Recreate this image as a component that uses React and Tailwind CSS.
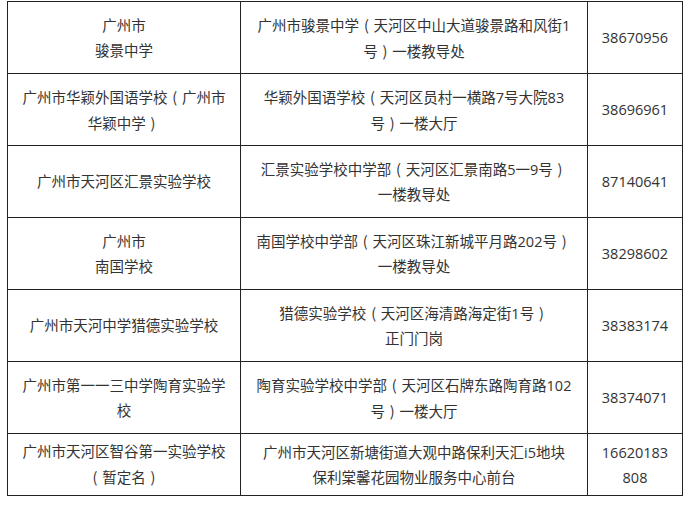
const rows = [
  {
    name: ["广州市", "骏景中学"],
    addr: ["广州市骏景中学（天河区中山大道骏景路和风街1", "号）一楼教导处"],
    tel: ["38670956"],
  },
  {
    name: ["广州市华颖外国语学校（广州市", "华颖中学）"],
    addr: ["华颖外国语学校（天河区员村一横路7号大院83", "号）一楼大厅"],
    tel: ["38696961"],
  },
  {
    name: ["广州市天河区汇景实验学校"],
    addr: ["汇景实验学校中学部（天河区汇景南路5一9号）", "一楼教导处"],
    tel: ["87140641"],
  },
  {
    name: ["广州市", "南国学校"],
    addr: ["南国学校中学部（天河区珠江新城平月路202号）", "一楼教导处"],
    tel: ["38298602"],
  },
  {
    name: ["广州市天河中学猎德实验学校"],
    addr: ["猎德实验学校（天河区海清路海定街1号）", "正门门岗"],
    tel: ["38383174"],
  },
  {
    name: ["广州市第一一三中学陶育实验学", "校"],
    addr: ["陶育实验学校中学部（天河区石牌东路陶育路102", "号）一楼大厅"],
    tel: ["38374071"],
  },
  {
    name: ["广州市天河区智谷第一实验学校", "（暂定名）"],
    addr: ["广州市天河区新塘街道大观中路保利天汇i5地块", "保利棠馨花园物业服务中心前台"],
    tel: ["16620183", "808"],
  },
];

// full-width brackets sit centred in their em box in the reference
const Text = ({ text }) =>
  text.split(/([（）])/).map((part, i) =>
    part === "（" || part === "）" ? (
      <span key={i} className="inline-block w-[1em] text-center" style={{ fontFamily: '"Noto Sans CJK SC", sans-serif' }}>
        {part === "（" ? "(" : ")"}
      </span>
    ) : (
      part
    )
  );

const Lines = ({ lines }) =>
  lines.map((l, i) => (
    <div key={i} className="whitespace-nowrap">
      <Text text={l} />
    </div>
  ));

const App = () => {
  return (
    <div className="w-[692px] h-[508px] bg-white pt-px pl-[7px]" style={{ fontFamily: '"Open Sans", "Noto Sans CJK SC", sans-serif' }}>
      <table className="border-collapse table-fixed text-[14.5px] leading-[25px] text-[#333] text-center">
        <colgroup>
          <col className="w-[233px]" />
          <col className="w-[347px]" />
          <col className="w-[95px]" />
        </colgroup>
        <tbody>
          {rows.map((r, i) => (
            <tr key={i} className={i === rows.length - 1 ? "h-[62px]" : "h-[72px]"}>
              <td className="border border-[#222] px-2 align-middle"><Lines lines={r.name} /></td>
              <td className="border border-[#222] px-2 align-middle"><Lines lines={r.addr} /></td>
              <td className="border border-[#222] px-2 align-middle"><Lines lines={r.tel} /></td>
            </tr>
          ))}
        </tbody>
      </table>
    </div>
  );
};

export default App;
